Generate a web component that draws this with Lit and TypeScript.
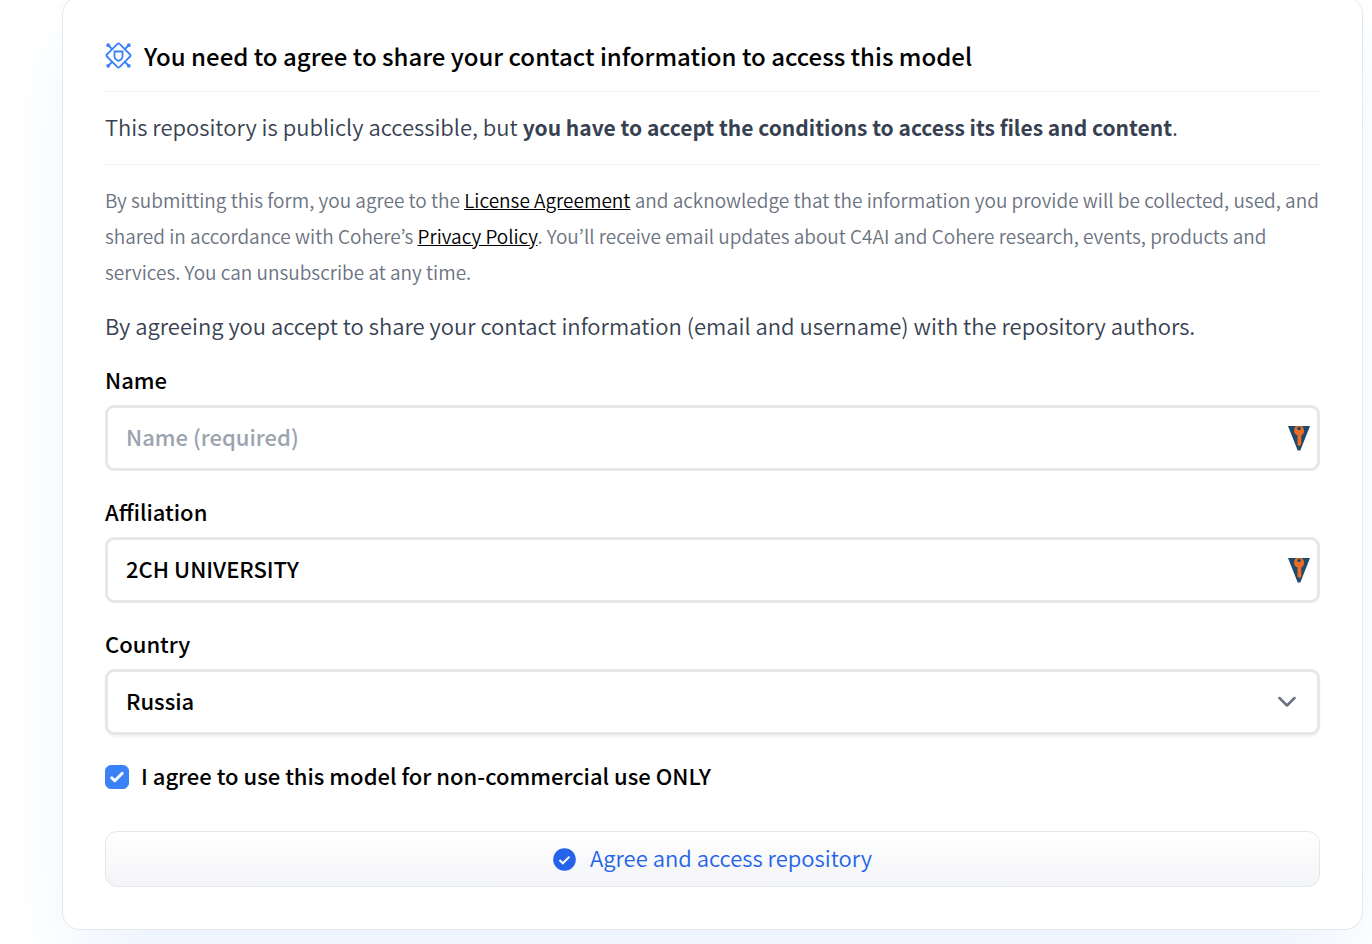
import { LitElement, html, css } from "lit";
import { customElement, property, state } from "lit/decorators.js";

@customElement("vault-mark")
class VaultMark extends LitElement {
  static styles = css`
    :host { display: block; line-height: 0; }
  `;
  render() {
    return html`<svg width="22" height="25" viewBox="0 0 22 25" aria-hidden="true">
      <path d="M0 0h22L12.300 24.500H9.700z" fill="#1f4a6b" />
      <path d="M7.800 0.300h6.400c1.200 1.300 1.900 3 1.800 4.900-.1 2-1.100 3.500-2.700 4.400v8.600l-1.300 1.500h-1.500l-1-1.200V9.600C7.400 8.700 6.200 7.200 6.100 5.200c-.1-1.900.5-3.600 1.700-4.900z" fill="#ee6c23" />
      <ellipse cx="11" cy="2.600" rx="2" ry="1.700" fill="#1f4a6b" />
    </svg>`;
  }
}

@customElement("text-field")
class TextField extends LitElement {
  @property() label = "";
  @property() value = "";
  @property() placeholder = "";

  static styles = css`
    :host { display: block; }
    .label { display: block; margin-bottom: 10px; line-height: 32px; }
    .box { position: relative; }
    .input {
      box-sizing: border-box;
      display: block;
      width: 100%;
      height: 66px;
      padding: 0 60px 4px 18px;
      border: 3px solid #e5e7eb;
      border-radius: 9px;
      background: #fff;
      color: #000;
      font: inherit;
      outline: none;
    }
    .input::placeholder { color: #9ca3af; opacity: 1; }
    .mark { position: absolute; right: 10px; top: 21px; }
  `;
  render() {
    return html`
      <label class="label" for="field">${this.label}</label>
      <div class="box">
        <input class="input" id="field" type="text" .value=${this.value} placeholder=${this.placeholder} />
        <vault-mark class="mark"></vault-mark>
      </div>
    `;
  }
}

@customElement("app-root")
class AppRoot extends LitElement {
  @state() private agreed = true;

  static styles = css`
    :host {
      display: block;
      box-sizing: border-box;
      min-height: 100vh;
      padding: 0 9px 14px 62px;
      overflow: hidden;
      background: #fff;
      color: #000;
      font-family: "Source Sans Pro", "Noto Sans CJK KR", "Noto Sans", sans-serif;
      font-size: 22px;
      font-weight: 350;
      line-height: 36px;
    }
    .card {
      margin-top: -4px;
      padding: 35px 42px 42px;
      border: 1px solid #e5e7eb;
      border-radius: 18px;
      background: #fff;
      box-shadow: 0 38px 75px -18px rgba(59, 130, 246, 0.12);
    }
    .title {
      display: flex;
      align-items: center;
      gap: 12px;
      margin: 0;
      padding-bottom: 11px;
      border-bottom: 1px solid #f3f4f6;
      font-size: 24px;
      line-height: 48px;
      font-weight: 500;
    }
    .title-icon { flex: none; width: 27px; height: 27px; margin-bottom: 2px; }
    .intro {
      margin: 0;
      padding: 16px 0 20px;
      border-bottom: 1px solid #f3f4f6;
      color: #374151;
    }
    .strong { font-size: 21px; font-weight: 600; line-height: 1; }
    .legal { margin: 17px 0; color: #6b7280; font-size: 19px; }
    .link { color: #000; text-decoration: underline; }
    .share { margin: 0 0 20px; color: #374151; }
    .form { display: flex; flex-direction: column; gap: 24px; font-weight: 500; }
    .label { display: block; margin-bottom: 10px; line-height: 32px; }
    .box { position: relative; }
    .select {
      appearance: none;
      box-sizing: border-box;
      display: block;
      width: 100%;
      height: 66px;
      padding: 0 60px 4px 18px;
      border: 3px solid #e5e7eb;
      border-radius: 9px;
      background: #fff;
      box-shadow: 0 2px 3px rgba(0, 0, 0, 0.05);
      color: #000;
      font: inherit;
    }
    .chevron { position: absolute; right: 24px; top: 27px; pointer-events: none; }
    .agree { display: flex; align-items: center; gap: 12px; }
    .agree-text { padding-bottom: 4px; line-height: 32px; }
    .tick { display: grid; flex: none; width: 24px; height: 24px; }
    .check {
      appearance: none;
      grid-area: 1 / 1;
      width: 24px;
      height: 24px;
      margin: 0;
      border: 1px solid #d1d5db;
      border-radius: 6px;
      background: #fff;
    }
    .check:checked { border-color: #3b82f6; background: #3b82f6; }
    .tick-mark { grid-area: 1 / 1; pointer-events: none; }
    .submit {
      display: flex;
      align-items: center;
      justify-content: center;
      gap: 14px;
      height: 56px;
      margin-top: 12px;
      padding: 0;
      border: 1px solid #e5e7eb;
      border-radius: 12px;
      background: linear-gradient(#fff, #f3f4f6);
      color: #2563eb;
      font: inherit;
      font-weight: 350;
    }
    .submit-text { padding-bottom: 4px; }
  `;

  private onAgree(e: Event) {
    this.agreed = (e.target as HTMLInputElement).checked;
  }

  render() {
    return html`
      <main class="card">
        <h1 class="title">
          <svg class="title-icon" viewBox="0 0 27 27" fill="none" stroke="#3b82f6" stroke-width="1.800" aria-hidden="true">
            <path d="M12.500 1.900 1.900 12.500q-1 1 0 2L12.500 25.100q1 1 2 0L25.100 14.500q1-1 0-2L14.500 1.900q-1-1-2 0Z" />
            <path d="M9.500 9.500h8v5c0 2.300-1.800 3.500-4 4.300-2.200-.8-4-2-4-4.300Z" />
            <path d="m3.500 3.500 4 4m16-4-4 4m-16 16 4-4m16 4-4-4" />
            <g fill="#3b82f6" stroke="none">
              <circle cx="3.200" cy="3.200" r="1.900" /><circle cx="23.800" cy="3.200" r="1.900" />
              <circle cx="3.200" cy="23.800" r="1.900" /><circle cx="23.800" cy="23.800" r="1.900" />
            </g>
          </svg>
          <span>You need to agree to share your contact information to access this model</span>
        </h1>
        <p class="intro">This repository is publicly accessible, but <b class="strong">you have to accept the conditions to access its files and content</b>.</p>
        <p class="legal">By submitting this form, you agree to the <a class="link" href="#license">License Agreement</a> and acknowledge that the information you provide will be collected, used, and shared in accordance with Cohere’s <a class="link" href="#privacy">Privacy Policy</a>. You’ll receive email updates about C4AI and Cohere research, events, products and services. You can unsubscribe at any time.</p>
        <p class="share">By agreeing you accept to share your contact information (email and username) with the repository authors.</p>
        <form class="form" @submit=${(e: Event) => e.preventDefault()}>
          <text-field label="Name" placeholder="Name (required)"></text-field>
          <text-field label="Affiliation" value="2CH UNIVERSITY"></text-field>
          <div>
            <label class="label" for="country">Country</label>
            <div class="box">
              <select class="select" id="country"><option selected>Russia</option></select>
              <svg class="chevron" width="18" height="12" viewBox="0 0 18 12" fill="none" stroke="#6b7280" stroke-width="2.500" stroke-linecap="round" stroke-linejoin="round" aria-hidden="true"><path d="m1.500 2 7.500 7.500L16.500 2" /></svg>
            </div>
          </div>
          <div class="agree">
            <span class="tick">
              <input class="check" id="agree" type="checkbox" .checked=${this.agreed} @change=${this.onAgree} />
              <svg class="tick-mark" width="24" height="24" viewBox="0 0 16 16" fill="#fff" aria-hidden="true"><path d="M12.207 4.793a1 1 0 0 1 0 1.414l-5 5a1 1 0 0 1-1.414 0l-2-2a1 1 0 0 1 1.414-1.414L6.500 9.086l4.293-4.293a1 1 0 0 1 1.414 0z" /></svg>
            </span>
            <label class="agree-text" for="agree">I agree to use this model for non-commercial use ONLY</label>
          </div>
          <button class="submit" type="submit">
            <svg width="23" height="23" viewBox="0 0 23 23" aria-hidden="true">
              <circle cx="11.500" cy="11.500" r="11.300" fill="#2563eb" />
              <path d="m6.500 12 3.300 3.300 6.700-6.700" fill="none" stroke="#fff" stroke-width="2" />
            </svg>
            <span class="submit-text">Agree and access repository</span>
          </button>
        </form>
      </main>
    `;
  }
}
